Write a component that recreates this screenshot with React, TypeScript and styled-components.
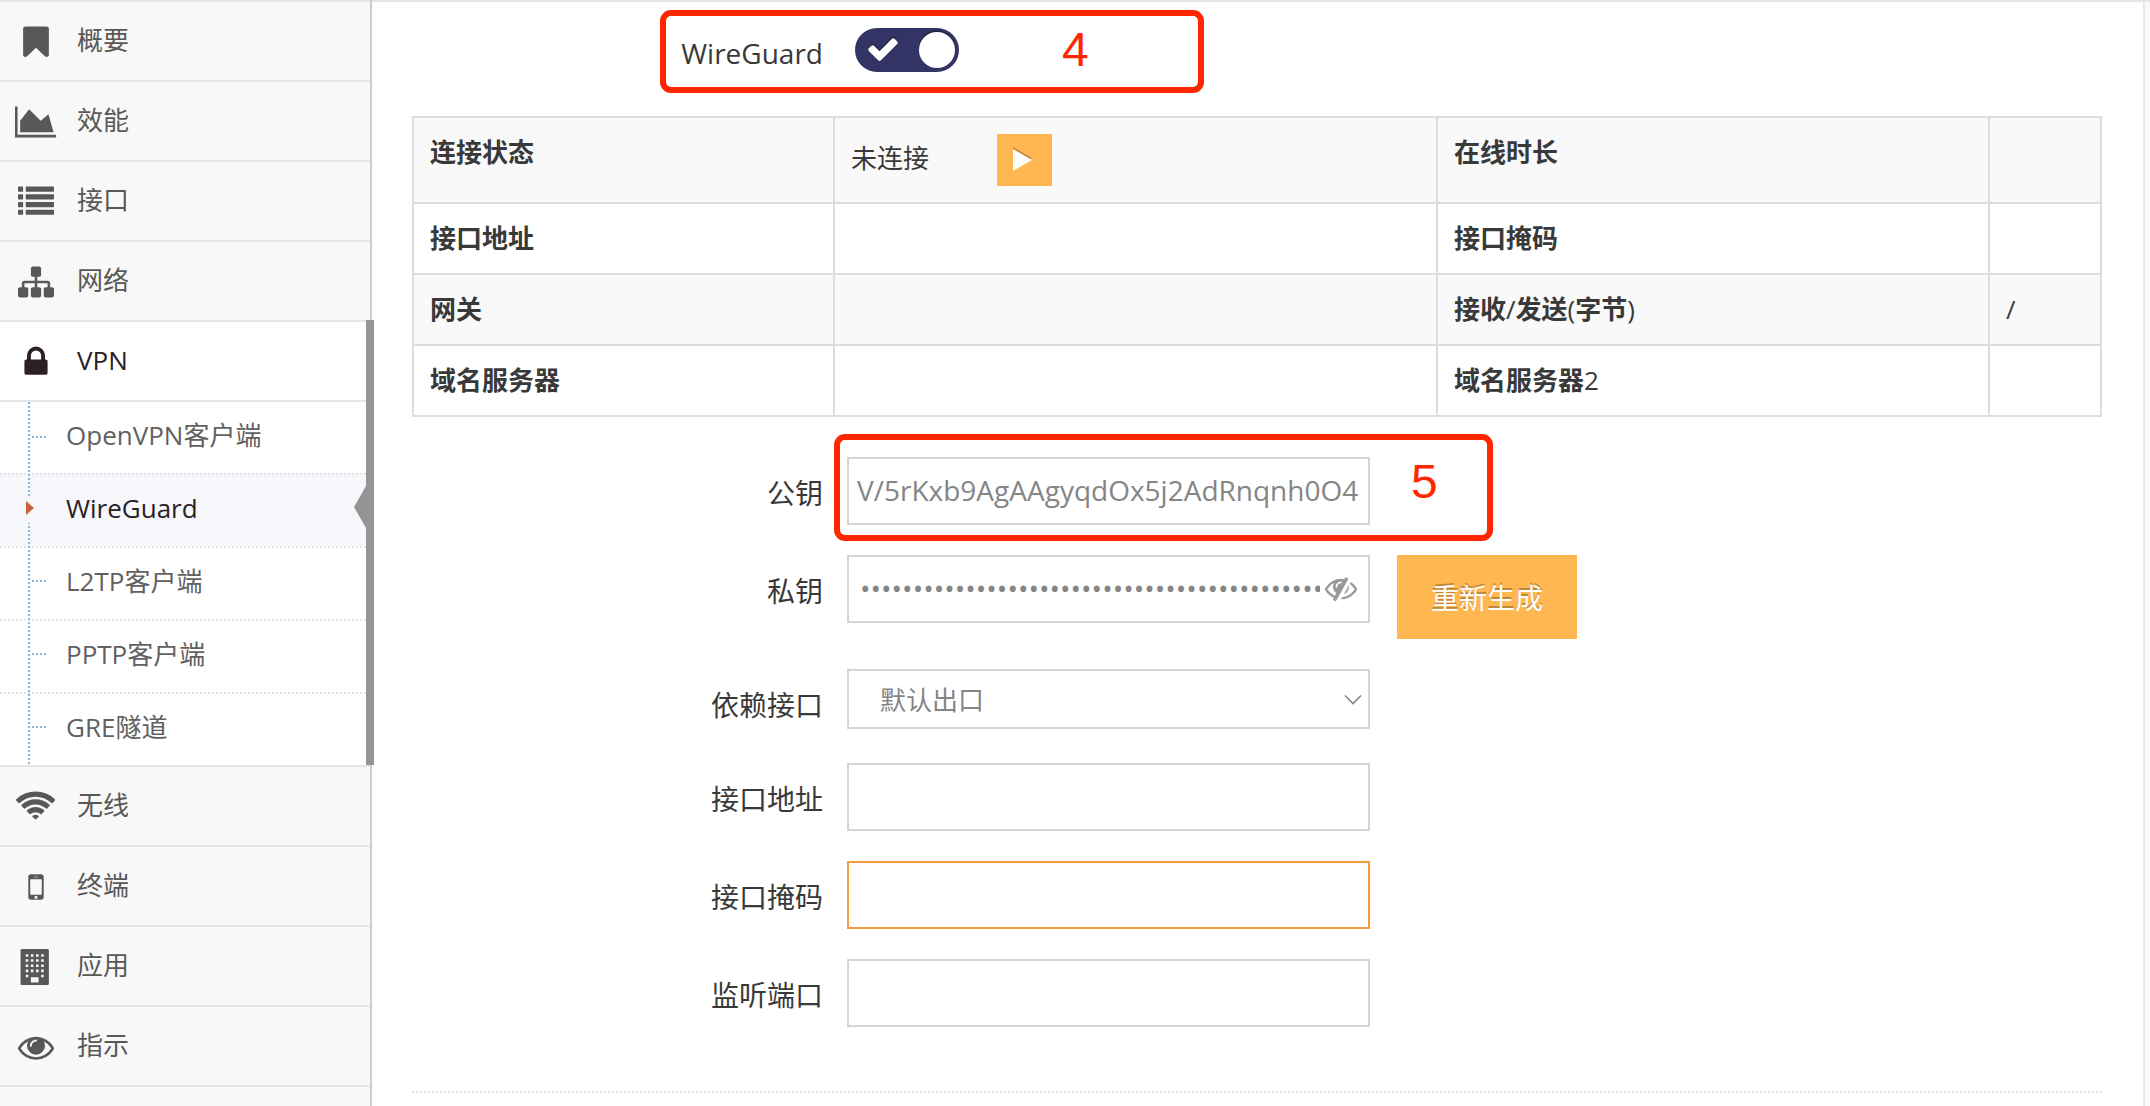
import React from 'react';
import styled, { createGlobalStyle, css } from 'styled-components';

const GlobalStyle = createGlobalStyle`
  * { box-sizing: border-box; }
  body {
    margin: 0;
    background: #fff;
    color: #393939;
    font-family: 'Open Sans', 'Noto Sans CJK SC', sans-serif;
    font-size: 26px;
  }
`;

const dots = (direction: string, color: string) => css`
  background-image: repeating-linear-gradient(${direction}, ${color} 0 2px, transparent 2px 4px);
`;

/* ---------- icons ---------- */

type Shape = { d: string; w?: number };

const shapes: Record<string, Shape> = {
  bookmark: {
    d: 'M1420 128q23 0 44 9 33 13 52.500 41t19.500 62v1289q0 34-19.500 62t-52.500 41q-19 8-44 8-48 0-83-32l-441-424-441 424q-36 33-83 33-23 0-44-9-33-13-52.500-41t-19.500-62v-1289q0-34 19.500-62t52.500-41q21-9 44-9h1048z',
  },
  chart: {
    w: 2048,
    d: 'M2048 1536v128h-2048v-1536h128v1408h1920zM1664 512l256 896h-1664v-576l448-576 576 576z',
  },
  list: {
    d: [128, 512, 896, 1280]
      .map(y => `M32 ${y}h192q32 0 32 32v192q0 32-32 32h-192q-32 0-32-32v-192q0-32 32-32zM416 ${y}h1344q32 0 32 32v192q0 32-32 32h-1344q-32 0-32-32v-192q0-32 32-32z`)
      .join(''),
  },
  sitemap: {
    d: 'M1792 1248v320q0 40-28 68t-68 28h-320q-40 0-68-28t-28-68v-320q0-40 28-68t68-28h96v-192h-512v192h96q40 0 68 28t28 68v320q0 40-28 68t-68 28h-320q-40 0-68-28t-28-68v-320q0-40 28-68t68-28h96v-192h-512v192h96q40 0 68 28t28 68v320q0 40-28 68t-68 28h-320q-40 0-68-28t-28-68v-320q0-40 28-68t68-28h96v-192q0-52 38-90t90-38h512v-192h-96q-40 0-68-28t-28-68v-320q0-40 28-68t68-28h320q40 0 68 28t28 68v320q0 40-28 68t-68 28h-96v192h512q52 0 90 38t38 90v192h96q40 0 68 28t28 68z',
  },
  lock: {
    d: 'M640 768h512v-192q0-106-75-181t-181-75-181 75-75 181v192zm832 96v576q0 40-28 68t-68 28h-960q-40 0-68-28t-28-68v-576q0-40 28-68t68-28h32v-192q0-184 132-316t316-132 316 132 132 316v192h32q40 0 68 28t28 68z',
  },
  wifi: {
    w: 2048,
    d: 'M1024 1523q-20 0-93-73.500t-73-93.500q0-32 62.500-54t103.500-22 103.500 22 62.500 54q0 20-73 93.500t-93 73.500zm270-271q-2 0-40-25t-101.500-50-128.500-25-128.500 25-101 50-40.500 25q-18 0-93.500-75t-75.500-93q0-13 10-23 78-77 196-121t233-44 233 44 196 121q10 10 10 23 0 18-75.500 93t-93.500 75zm273-272q-11 0-23-8-136-105-252-154.500t-268-49.500q-85 0-170.500 22t-149 53-113.500 62-79 53-31 22q-17 0-92-75t-75-93q0-12 10-22 132-132 320-205t380-73 380 73 320 205q10 10 10 22 0 18-75 93t-92 75zm271-271q-11 0-22-9-179-157-371.500-236.500t-420.500-79.500-420.500 79.500-371.500 236.500q-11 9-22 9-17 0-92.500-75t-75.500-93q0-13 10-23 187-186 445-288t527-102 527 102 445 288q10 10 10 23 0 18-75.500 93t-92.500 75z',
  },
  mobile: {
    d: 'M976 1408q0-33-23.500-56.500t-56.500-23.500-56.500 23.500-23.500 56.500 23.500 56.500 56.500 23.500 56.500-23.500 23.500-56.500zm208-160v-704q0-13-9.500-22.500t-22.500-9.500h-512q-13 0-22.500 9.500t-9.500 22.500v704q0 13 9.500 22.500t22.500 9.500h512q13 0 22.500-9.500t9.500-22.500zm-192-848q0-16-16-16h-160q-16 0-16 16t16 16h160q16 0 16-16zm288-16v1024q0 52-38 90t-90 38h-512q-52 0-90-38t-38-90v-1024q0-52 38-90t90-38h512q52 0 90 38t38 90z',
  },
  building: {
    d:
      'M192 0h1280q64 0 64 64v1664q0 64-64 64h-1280q-64 0-64-64v-1664q0-64 64-64z' +
      [256, 512, 768, 1024, 1280]
        .map(y =>
          [384, 640, 896, 1152]
            .filter(x => y < 1280 || x === 384 || x === 1152)
            .map(x => `M${x} ${y}h128v128h-128z`)
            .join('')
        )
        .join('') +
      'M640 1408h384v256h-384z',
  },
  eye: {
    d: 'M1664 960q-152-236-381-353 61 104 61 225 0 185-131.500 316.500t-316.500 131.500-316.500-131.500-131.500-316.500q0-121 61-225-229 117-381 353 133 205 333.500 326.500t434.500 121.500 434.500-121.500 333.500-326.500zm-720-384q0-20-14-34t-34-14q-125 0-214.500 89.500t-89.500 214.500q0 20 14 34t34 14 34-14 14-34q0-86 61-147t147-61q20 0 34-14t14-34zm848 384q0 34-20 69-140 230-376.500 368.500t-499.500 138.500-499.500-139-376.500-368q-20-35-20-69t20-69q140-229 376.500-368t499.500-139 499.500 139 376.500 368q20 35 20 69z',
  },
  eyeSlash: {
    d: 'M555 1335l78-141q-87-63-136-159t-49-203q0-121 61-225-229 117-381 353 167 258 427 375zm389-759q0-20-14-34t-34-14q-125 0-214.500 89.500t-89.500 214.500q0 20 14 34t34 14 34-14 14-34q0-86 61-147t147-61q20 0 34-14t14-34zm363-191q0 7-1 9-106 189-316 567t-315 566l-49 89q-10 16-28 16-12 0-134-70-16-10-16-28 0-12 44-87-143-65-263.500-173t-208.500-245q-20-31-20-69t20-69q153-235 380-371t496-136q89 0 180 17l54-97q10-16 28-16 5 0 18 6t31 15.500 33 18.500 31.500 18.500 19.500 11.500q16 10 16 27zm37 447q0 139-79 253.500t-209 164.500l280-502q8 45 8 84zm448 128q0 35-20 69-39 64-109 145-150 172-347.500 267t-419.500 95l74-132q212-18 392.500-137t301.500-307q-115-179-282-294l63-112q95 64 182.500 153t144.500 184q20 34 20 69z',
  },
  check: {
    d: 'M1671 566q0 40-28 68l-724 724-136 136q-28 28-68 28t-68-28l-136-136-362-362q-28-28-28-68t28-68l136-136q28-28 68-28t68 28l294 295 656-657q28-28 68-28t68 28l136 136q28 28 28 68z',
  },
};

const Glyph = styled.svg`
  display: block;
  flex: none;
  fill: currentColor;
`;

function Icon({ name, size }: { name: string; size: number }) {
  const { d, w = 1792 } = shapes[name];
  return (
    <Glyph width={(size * w) / 1792} height={size} viewBox={`0 0 ${w} 1792`}>
      <path fillRule={name === 'building' ? 'evenodd' : 'nonzero'} d={d} />
    </Glyph>
  );
}

/* ---------- page frame ---------- */

const Page = styled.div`
  display: grid;
  grid-template-columns: 372px 1fr 7px;
  height: 1106px;
  overflow: hidden;
`;

const Sidebar = styled.nav`
  position: relative;
  z-index: 1;
  background: #f8f8f8;
  border-right: 2px solid #ccc;
`;

const Main = styled.main`
  border-top: 2px solid #e5e5e5;
  border-right: 2px solid #e8e8e8;
  padding: 0 41px 0 40px;
`;

const Gutter = styled.div`
  background: #fafafa;
  border-top: 2px solid #e5e5e5;
`;

/* ---------- sidebar ---------- */

const NavItem = styled.a<{ $open?: boolean }>`
  display: flex;
  align-items: center;
  height: 80px;
  border-top: 2px solid #e5e5e5;
  color: ${p => (p.$open ? '#2b2123' : '#585858')};
  background: ${p => (p.$open ? '#fff' : 'transparent')};
`;

const NavIcon = styled.span`
  display: flex;
  justify-content: center;
  width: 72px;
  padding-top: 2px;
`;

const NavText = styled.span`
  padding: 0 0 3px 5px;
  line-height: 36px;
`;

const OpenGroup = styled.div`
  position: relative;
  width: 374px;
  height: 445px;
  border-right: 8px solid #959595;
  background: #fff;
`;

const Submenu = styled.div`
  position: relative;
  border-top: 2px solid #e5e5e5;
`;

const Trunk = styled.span`
  position: absolute;
  left: 28px;
  top: 0;
  bottom: 0;
  width: 2px;
  ${dots('to bottom', '#8db3d6')}
`;

const SubItem = styled.a<{ $active?: boolean }>`
  display: flex;
  align-items: center;
  height: 73px;
  padding-left: 66px;
  padding-bottom: ${p => (p.$active ? 3 : 5)}px;
  color: ${p => (p.$active ? '#2b2123' : '#616161')};
  background-color: ${p => (p.$active ? '#f5f7fb' : '#fff')};
  position: relative;

  & + & {
    ${dots('to right', '#e4e4e4')}
    background-size: 100% 2px;
    background-repeat: no-repeat;
  }
  &:first-child {
    height: 71px;
    padding-bottom: 7px;
  }
`;

const Twig = styled.span`
  position: absolute;
  left: 32px;
  top: 34px;
  width: 14px;
  height: 2px;
  ${dots('to right', '#8db3d6')}
`;

const Caret = styled.span`
  position: absolute;
  z-index: 1;
  left: 25px;
  top: 24px;
  width: 10px;
  height: 26px;
  background: #f5f7fb;

  &::before {
    content: '';
    position: absolute;
    left: 1px;
    top: 4px;
    border: solid transparent;
    border-width: 7px 0 7px 8px;
    border-left-color: #c86139;
  }
`;

const Pointer = styled.span`
  position: absolute;
  right: 0;
  top: 13px;
  border: solid transparent;
  border-width: 21px 12px 21px 0;
  border-right-color: #959595;
`;

/* ---------- switch row ---------- */

const SwitchRow = styled.div`
  display: flex;
  height: 114px;
`;

const SwitchLabel = styled.label`
  width: 411px;
  padding-top: 31px;
  text-align: right;
  font-size: 28px;
  line-height: 40px;
`;

const Toggle = styled.button`
  display: flex;
  align-items: center;
  justify-content: space-between;
  width: 104px;
  height: 44px;
  margin: 26px 0 0 32px;
  padding: 0 4px 0 11px;
  border: 0;
  border-radius: 22px;
  background: #333366;
  color: #fff;

  svg { margin-bottom: 3px; filter: drop-shadow(0 -2px 0 rgba(0, 0, 0, 0.25)); }
`;

const Knob = styled.span`
  width: 36px;
  height: 36px;
  border-radius: 50%;
  background: #fff;
  box-shadow: 0 -2px 0 rgba(0, 0, 0, 0.25);
`;

/* ---------- status table ---------- */

const StatusTable = styled.div`
  display: grid;
  grid-template-columns: 419px 601px 550px 110px;
  grid-template-rows: 84px 69px 69px 69px;
  gap: 2px;
  width: 1690px;
  border: 2px solid #ddd;
  background: #ddd;
`;

const Cell = styled.div<{ $shade: boolean; $head?: boolean }>`
  padding: 16px 16px 0;
  line-height: 36px;
  background: ${p => (p.$shade ? '#f9f9f9' : '#fff')};
  font-weight: ${p => (p.$head ? 700 : 400)};
`;

const Thin = styled.span`
  font-weight: 400;
`;

const Connection = styled.div`
  display: flex;
  align-items: center;
  justify-content: space-between;
  width: 201px;
  height: 52px;
  padding-bottom: 4px;
`;

const PlayButton = styled.button`
  display: flex;
  align-items: center;
  width: 55px;
  height: 52px;
  flex: none;
  margin-bottom: -4px;
  padding: 0 0 0 16px;
  border: 0;
  background: #ffb752;
`;

/* ---------- form ---------- */

const Form = styled.form`
  padding-top: 40px;
`;

const Row = styled.div<{ $gap: number }>`
  display: flex;
  align-items: flex-start;
  margin-bottom: ${p => p.$gap}px;
`;

const Label = styled.label`
  width: 411px;
  margin-right: 24px;
  padding-top: 16px;
  text-align: right;
  font-size: 28px;
  line-height: 40px;
`;

const Field = styled.div<{ $focus?: boolean; $select?: boolean }>`
  display: flex;
  align-items: center;
  width: 523px;
  height: ${p => (p.$select ? 60 : 68)}px;
  padding: ${p => (p.$select ? '1px 6px 0 31px' : '0 8px 3px')};
  border: 2px solid ${p => (p.$focus ? '#f59942' : '#d5d5d5')};
  color: #858585;
  background: #fff;
  font-size: ${p => (p.$select ? 26 : 28)}px;
  line-height: 40px;
  white-space: nowrap;
  justify-content: space-between;
`;

const Secret = styled.span`
  width: 463px;
  padding-left: 3px;
  overflow: hidden;
`;

const Reveal = styled.span`
  margin-right: 3px;
  color: #999;
`;

const Regenerate = styled.button`
  width: 180px;
  height: 84px;
  margin-left: 27px;
  padding: 2px 0 0;
  border: 0;
  background: #ffb752;
  color: #fff;
  font: 28px/40px 'Open Sans', 'Noto Sans CJK SC', sans-serif;
  text-shadow: 0 -2px 0 rgba(0, 0, 0, 0.25);
`;

const Divider = styled.div`
  height: 2px;
  margin-top: 64px;
  ${dots('to right', '#e3e3e3')}
`;

/* ---------- hand-drawn callouts over the page ---------- */

const Callout = styled.div<{ $x: number; $y: number; $w: number; $h: number }>`
  position: absolute;
  z-index: 2;
  left: ${p => p.$x}px;
  top: ${p => p.$y}px;
  width: ${p => p.$w}px;
  height: ${p => p.$h}px;
  border: 6px solid #ff2600;
  border-radius: 11px;
  pointer-events: none;
`;

const Step = styled.span<{ $x: number; $y: number }>`
  position: absolute;
  left: ${p => p.$x}px;
  top: ${p => p.$y}px;
  color: #ff2600;
  font: 48px/48px 'Liberation Sans', Arial, sans-serif;
`;

const before = [
  ['bookmark', '概要'],
  ['chart', '效能'],
  ['list', '接口'],
  ['sitemap', '网络'],
];
const after = [
  ['wifi', '无线'],
  ['mobile', '终端'],
  ['building', '应用'],
  ['eye', '指示'],
];
const vpnItems = ['OpenVPN客户端', 'WireGuard', 'L2TP客户端', 'PPTP客户端', 'GRE隧道'];

const status: [string, React.ReactNode, React.ReactNode, string][] = [
  [
    '连接状态',
    <Connection key="c">
      <span>未连接</span>
      <PlayButton type="button">
        <svg width="20" height="26" viewBox="0 0 20 26">
          <path d="M0 2l19 11L0 24z" fill="#bf893d" transform="translate(0 -2)" />
          <path d="M0 2l19 11L0 24z" fill="#fff" />
        </svg>
      </PlayButton>
    </Connection>,
    '在线时长',
    '',
  ],
  ['接口地址', '', '接口掩码', ''],
  ['网关', '', <>接收<Thin>/</Thin>发送<Thin>(</Thin>字节<Thin>)</Thin></>, '/'],
  ['域名服务器', '', <>域名服务器<Thin>2</Thin></>, ''],
];

function NavRow({ icon, text, open }: { icon: string; text: string; open?: boolean }) {
  return (
    <NavItem $open={open}>
      <NavIcon><Icon name={icon} size={36} /></NavIcon>
      <NavText>{text}</NavText>
    </NavItem>
  );
}

export default function App() {
  return (
    <>
      <GlobalStyle />
      <Page>
        <Sidebar>
          {before.map(([icon, text]) => <NavRow key={text} icon={icon} text={text} />)}
          <OpenGroup>
            <NavRow icon="lock" text="VPN" open />
            <Submenu>
              {vpnItems.map(text => {
                const active = text === 'WireGuard';
                return (
                  <SubItem key={text} $active={active}>
                    {active ? <><Caret /><Pointer /></> : <Twig />}
                    {text}
                  </SubItem>
                );
              })}
              <Trunk />
            </Submenu>
          </OpenGroup>
          {after.map(([icon, text]) => <NavRow key={text} icon={icon} text={text} />)}
          <NavItem />
        </Sidebar>

        <Main>
          <SwitchRow>
            <SwitchLabel>WireGuard</SwitchLabel>
            <Toggle type="button">
              <Icon name="check" size={34} />
              <Knob />
            </Toggle>
          </SwitchRow>

          <StatusTable>
            {status.map(([a, b, c, d], i) => {
              const shade = i % 2 === 0;
              return (
                <React.Fragment key={a}>
                  <Cell $shade={shade} $head>{a}</Cell>
                  <Cell $shade={shade}>{b}</Cell>
                  <Cell $shade={shade} $head>{c}</Cell>
                  <Cell $shade={shade}>{d}</Cell>
                </React.Fragment>
              );
            })}
          </StatusTable>

          <Form>
            <Row $gap={30}>
              <Label>公钥</Label>
              <Field>V/5rKxb9AgAAgyqdOx5j2AdRnqnh0O4</Field>
            </Row>
            <Row $gap={30}>
              <Label>私钥</Label>
              <Field>
                <Secret>{'•'.repeat(44)}</Secret>
                <Reveal><Icon name="eyeSlash" size={32} /></Reveal>
              </Field>
              <Regenerate type="button">重新生成</Regenerate>
            </Row>
            <Row $gap={34}>
              <Label>依赖接口</Label>
              <Field $select>
                默认出口
                <svg width="18" height="12" viewBox="0 0 18 12" fill="none" stroke="#858585" strokeWidth="1.6">
                  <path d="M1 1.5l8 8 8-8" />
                </svg>
              </Field>
            </Row>
            <Row $gap={30}>
              <Label>接口地址</Label>
              <Field />
            </Row>
            <Row $gap={30}>
              <Label>接口掩码</Label>
              <Field $focus />
            </Row>
            <Row $gap={0}>
              <Label>监听端口</Label>
              <Field />
            </Row>
          </Form>
          <Divider />
        </Main>
        <Gutter />
      </Page>

      <Callout $x={660} $y={10} $w={544} $h={83}>
        <Step $x={396} $y={10}>4</Step>
      </Callout>
      <Callout $x={834} $y={434} $w={659} $h={107}>
        <Step $x={571} $y={18}>5</Step>
      </Callout>
    </>
  );
}
